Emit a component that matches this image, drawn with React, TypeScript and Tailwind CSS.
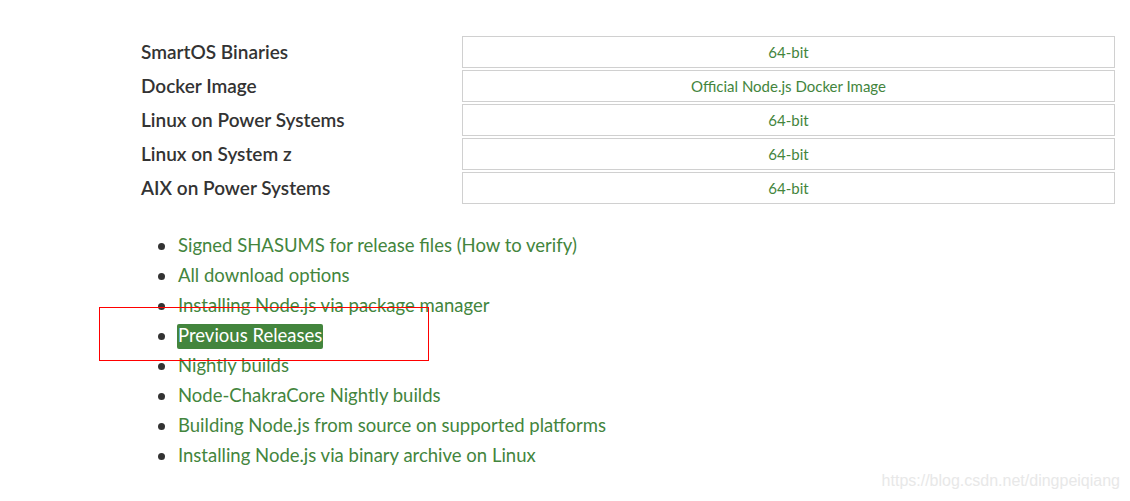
import React from "react";

const rows: [string, string][] = [
  ["SmartOS Binaries", "64-bit"],
  ["Docker Image", "Official Node.js Docker Image"],
  ["Linux on Power Systems", "64-bit"],
  ["Linux on System z", "64-bit"],
  ["AIX on Power Systems", "64-bit"],
];

const links = [
  "Signed SHASUMS for release files (How to verify)",
  "All download options",
  "Installing Node.js via package manager",
  "Previous Releases",
  "Nightly builds",
  "Node-ChakraCore Nightly builds",
  "Building Node.js from source on supported platforms",
  "Installing Node.js via binary archive on Linux",
];

export default function App() {
  return (
    <div
      className="relative w-[1130px] h-[501px] bg-white overflow-hidden"
      style={{ fontFamily: "Lato, 'Noto Sans', sans-serif" }}
    >
      <div className="pl-[141px] pr-[15px] pt-[35px] flex flex-col">
        {rows.map(([label, val]) => (
          <div key={label} className="flex items-center h-[34px]">
            <div className="w-[321px] text-[19px] font-semibold text-[#333]">{label}</div>
            <div className="flex-1 h-[32px] border border-[#d0d0d0] flex items-center justify-center text-[15px] text-[#43853d]">
              {val}
            </div>
          </div>
        ))}
      </div>
      <ul className="mt-[26px] pl-[158px] flex flex-col">
        {links.map((l) => (
          <li key={l} className="flex items-center h-[30px]">
            <span className="w-[7px] h-[7px] rounded-full bg-[#333] mr-[13px]" />
            {l === "Previous Releases" ? (
              <span className="bg-[#43853d] text-white rounded-[2px] px-[1px] -ml-[1px] h-[25px] flex items-center text-[18.5px]">
                {l}
              </span>
            ) : (
              <span className="text-[18.5px] text-[#43853d]">{l}</span>
            )}
          </li>
        ))}
      </ul>
      <div className="absolute left-[99px] top-[307px] w-[330px] h-[54px] border border-[#ff0000]" />
      <div
        className="absolute right-[10px] bottom-[8px] text-[16px] text-[#e8e8e8]"
        style={{ fontFamily: "'Liberation Sans', Arial, sans-serif" }}
      >
        https://blog.csdn.net/dingpeiqiang
      </div>
    </div>
  );
}
